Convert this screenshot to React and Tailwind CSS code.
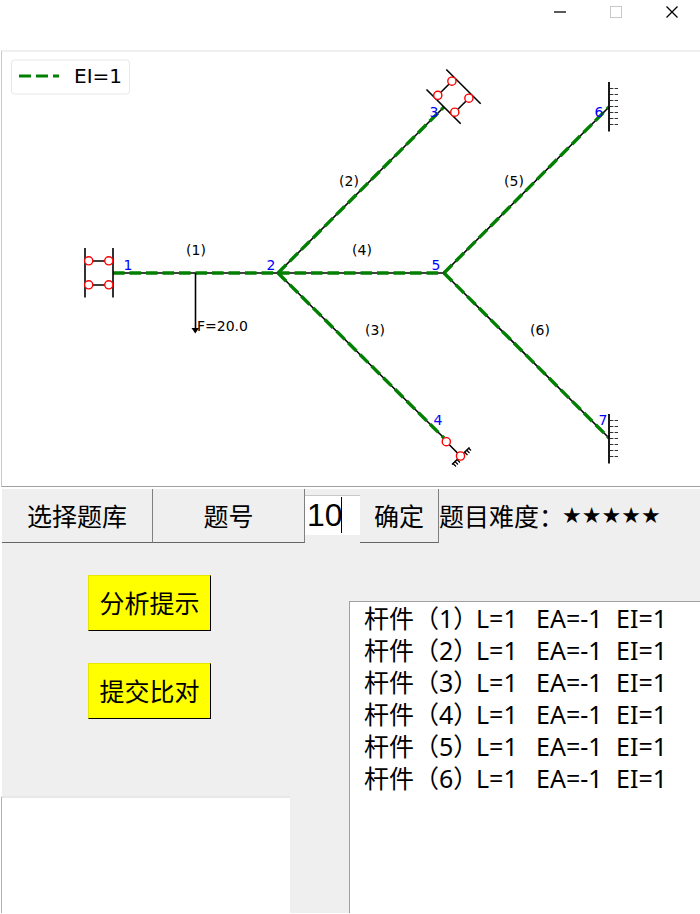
const members = [
  [113, 273, 278, 273],
  [278, 273, 444, 107],
  [278, 273, 444, 438],
  [278, 273, 444, 273],
  [444, 273, 609, 107],
  [444, 273, 609, 438],
];

const memberLabels = [
  ["(1)", 196, 255],
  ["(2)", 349, 186],
  ["(3)", 375, 335],
  ["(4)", 362, 255],
  ["(5)", 514, 186],
  ["(6)", 540, 335],
];

const nodeLabels = [
  ["1", 128, 270],
  ["2", 271, 270],
  ["3", 434, 117],
  ["4", 438, 425],
  ["5", 436, 270],
  ["6", 599, 117],
  ["7", 603, 425],
];

const pins = [
  [88.7, 260.8], [108.8, 260.8], [88.7, 284.8], [108.8, 284.8],
  [437.8, 95.3], [451.9, 81.2], [454.8, 112.2], [468.9, 98.2],
  [446.3, 441.7], [460.5, 456],
];

const fixedSupports = [82, 414];
const bars = [1, 2, 3, 4, 5, 6];

function Frame() {
  return (
    <svg
      viewBox="2 52 698 434"
      role="img"
      aria-label="EI=1"
      className="block w-full font-['DejaVu_Sans',sans-serif]"
    >
      <rect x="11.5" y="60" width="118" height="34" rx="3" fill="#fff" stroke="#e8e8e8" />
      <path d="M19 76H59" stroke="#008000" strokeWidth="3" strokeDasharray="12 5" />
      <text x="74" y="83" fontSize="20">EI=1</text>

      {members.map(([x1, y1, x2, y2], i) => (
        <g key={i}>
          <line x1={x1} y1={y1} x2={x2} y2={y2} stroke="#000" strokeWidth="1.6" />
          <line x1={x1} y1={y1} x2={x2} y2={y2} stroke="#008000" strokeWidth="3.4" strokeDasharray="11.6 4.9" />
        </g>
      ))}

      <g stroke="#000" strokeWidth="1.6" fill="none">
        <path d="M85 248V297.500M113 248V297.500M89 261H109M89 285H109" />
        <path d="M426.500 89.500L460.700 123.700M446.300 69.500L480.700 103.700M437.800 95.300L451.900 81.200M454.800 112.200L468.900 98.200" />
        <path d="M446.300 441.700L460.500 456M452 464.500L469.500 447.500" />
        <path d="M453 463.500l3 3M455 461.500l3 3M457 459.500l3 3M464.500 452l3 3M466.500 450l3 3M468.500 448l2.500 2.500" strokeWidth="1.2" />
        <path d="M195.500 273V330" />
      </g>
      <path d="M191.500 328H199L195.300 333.500Z" />

      {fixedSupports.map((y) => (
        <g key={y}>
          <path d={`M609 ${y}v49.500`} stroke="#000" strokeWidth="1.8" />
          {[7, 13, 19, 25, 31, 37, 43].map((d) => (
            <path key={d} d={`M610 ${y + d - 0.5}h8`} stroke="#333" strokeDasharray="3.400 1.200" />
          ))}
        </g>
      ))}

      {pins.map(([x, y], i) => (
        <circle key={i} cx={x} cy={y} r="4.1" fill="#fff" stroke="#f00" strokeWidth="1.4" />
      ))}

      <g fontSize="14" textAnchor="middle">
        {memberLabels.map(([t, x, y]) => <text key={t} x={x} y={y}>{t}</text>)}
        {nodeLabels.map(([t, x, y]) => <text key={t} x={x} y={y} fill="#00f">{t}</text>)}
      </g>
      <text x="197" y="331" fontSize="14">F=20.0</text>
    </svg>
  );
}

function ToolButton({ className, children }) {
  return (
    <button className={`h-[54px] border-r border-b border-r-[#808080] border-b-[#666] bg-[#efefef] ${className}`}>
      {children}
    </button>
  );
}

function HintButton({ children }) {
  return (
    <button className="h-14 w-[123px] border border-t-[#e6e600] border-r-black border-b-black border-l-[#e6e600] bg-[#ff0]">
      {children}
    </button>
  );
}

export default function App() {
  return (
    <div className="flex min-h-screen flex-col bg-white pb-px font-['Noto_Sans','Noto_Sans_CJK_SC',sans-serif] text-[25px] leading-8 text-black">
      <header className="flex h-[50px] items-start justify-end">
        <button aria-label="最小化" className="flex h-6 w-14 items-center justify-center">
          <svg width="14" height="14" viewBox="0 0 14 14"><path d="M1 7H13" stroke="#000" strokeWidth="1.3" /></svg>
        </button>
        <button aria-label="最大化" disabled className="flex h-6 w-14 items-center justify-center">
          <svg width="14" height="14" viewBox="0 0 14 14"><rect x="1.5" y="1.5" width="11" height="11" fill="none" stroke="#c8c8c8" /></svg>
        </button>
        <button aria-label="关闭" className="flex h-6 w-14 items-center justify-center">
          <svg width="14" height="14" viewBox="0 0 14 14"><path d="M1.500 1.500L12.500 12.500M12.500 1.500L1.500 12.500" stroke="#000" strokeWidth="1.3" /></svg>
        </button>
      </header>

      <main className="flex flex-1 flex-col">
        <section className="ml-px border-t-2 border-b border-l border-t-[#efefef] border-b-[#a0a0a0] border-l-[#c8c8c8]">
          <Frame />
        </section>

        <div className="mt-0.5 ml-0.5 flex flex-1 flex-col bg-[#efefef]">
          <div className="flex items-start">
            <ToolButton className="w-[151px]">选择题库</ToolButton>
            <ToolButton className="w-[152px]">题号</ToolButton>
            <div className="relative mt-1.5 w-[55px]">
              <input
                aria-label="题号"
                defaultValue="10"
                className="h-10 w-full border-t border-t-[#c8c8c8] bg-white px-0.5 font-['Liberation_Sans',sans-serif] text-[32px] outline-none"
              />
              <span className="absolute top-0.5 left-9 h-9 w-px bg-black" />
            </div>
            <ToolButton className="w-[79px]">确定</ToolButton>
            <p className="flex h-[54px] items-center whitespace-nowrap">
              题目难度：
              <span className="-ml-0.5 font-['DejaVu_Sans',sans-serif] text-[22px]">★★★★★</span>
            </p>
          </div>

          <div className="grid flex-1 grid-cols-[minmax(0,347fr)_minmax(0,351fr)]">
            <div className="flex flex-col">
              <div className="flex flex-col gap-8 pt-8 pl-[86px]">
                <HintButton>分析提示</HintButton>
                <HintButton>提交比对</HintButton>
              </div>
              <textarea
                aria-label="分析提示"
                className="mt-[77px] -ml-px w-5/6 flex-1 resize-none border-t-2 border-l border-t-[#e8e8e8] border-l-[#b0b0b0] bg-white outline-none"
              />
            </div>
            <ul className="mt-[58px] border-t border-l border-[#a0a0a0] bg-white pl-3.5">
              {bars.map((n) => (
                <li key={n} className="flex whitespace-nowrap">
                  <span className="w-28">杆件（{n}）</span>
                  <span className="w-15">L=1</span>
                  <span className="w-20">EA=-1</span>
                  <span>EI=1</span>
                </li>
              ))}
            </ul>
          </div>
        </div>
      </main>
    </div>
  );
}
